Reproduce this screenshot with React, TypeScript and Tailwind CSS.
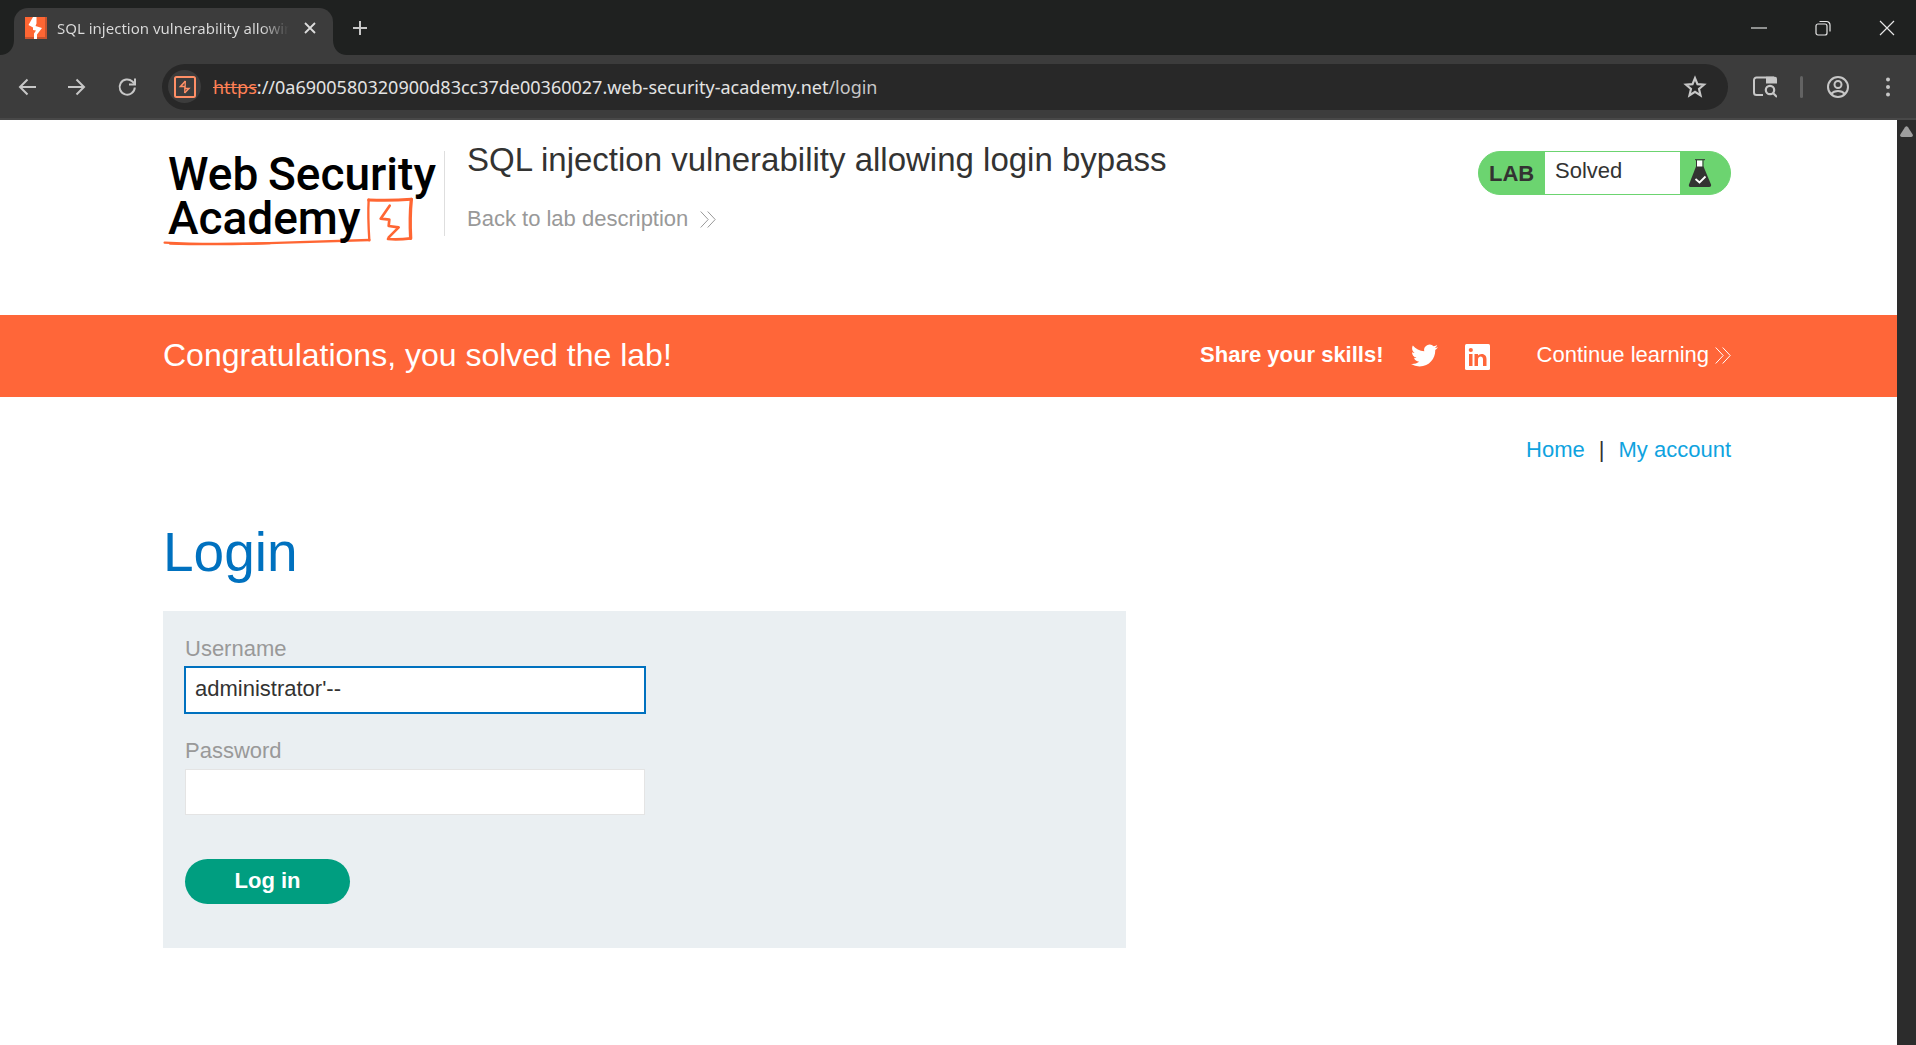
import type { ReactNode } from "react";

function Bolt({ className }: { className: string }) {
  return (
    <svg className={className} viewBox="0 0 22 22" aria-hidden="true">
      <path d="M20 0h2v22h-22v-2h20z" fill="#c9542f" />
      <path d="M8 0h3.500v6.500l-1 2.500 6.500 2-5 6.500V22H9v-5.500l2-3-3-.5v-2.500L3.500 8z" fill="#fff" />
    </svg>
  );
}

function SiteIcon() {
  return (
    <svg className="size-[22px]" viewBox="0 0 22 22" fill="none" stroke="#ff8f66" aria-hidden="true">
      <rect x="1" y="1" width="20" height="20" rx="1.500" strokeWidth="2" />
      <path d="M11.500 5 6.500 10.500h4.500v2h3.800L10.500 17" strokeWidth="1.600" />
      <path d="M11.200 5v5M10.800 12.500V17" strokeWidth="1.300" />
    </svg>
  );
}

function ToolIcon({ children, className }: { children: ReactNode; className: string }) {
  return (
    <svg className={className} viewBox="0 0 24 24" fill="none" stroke="#c7c7c7" strokeWidth="2" aria-hidden="true">
      {children}
    </svg>
  );
}

function Chevrons({ className }: { className: string }) {
  return (
    <svg className={className} viewBox="0 0 16 17" fill="none" stroke="currentColor" strokeWidth="1" aria-hidden="true">
      <path d="M.7.500 8.200 8.500.7 16.500M7.700.500l7.500 8-7.500 8" />
    </svg>
  );
}

function Logo() {
  return (
    <svg className="h-[105px] w-[281px] shrink-0" viewBox="13 15 281 105" role="img" aria-label="Web Security Academy">
      <g transform="scale(0.333333)" fill="none" stroke="#ff6633" strokeLinejoin="round" strokeLinecap="round">
        <path d="M44 338c90 5 240 4 360 0l254-8" strokeWidth="7" />
        <path d="M60 341c80 3 200 2 300-1" strokeWidth="6" />
        <path d="M658 331c-3-45-4-85-2-122" strokeWidth="7" />
        <path d="M656 210c45 2 90 1 128-2" strokeWidth="9" />
        <path d="M784 208c-4 40-4 80-2 117" strokeWidth="10" />
        <path d="M782 325c-24 3-46 4-68 2" strokeWidth="8" />
        <path d="M716 322l30-30-30-4 2-19-26-3 27-39" strokeWidth="8" />
      </g>
      <g fill="#000" fontFamily="Roboto, sans-serif" fontWeight="500" fontSize="46">
        <text x="18" y="60">Web</text>
        <text x="118" y="60">Security</text>
        <text x="18" y="104">Academy</text>
      </g>
    </svg>
  );
}

function Browser() {
  return (
    <>
      <div className="flex h-[55px] items-end bg-[#1f2120] text-[#dcdcdc]">
        <svg className="h-[15px] w-[14px] shrink-0" viewBox="0 0 14 15" aria-hidden="true">
          <path d="M0 15C8 15 14 9 14 0v15z" fill="#3c3c3c" />
        </svg>
        <div className="flex h-[47px] w-[319px] shrink-0 items-center rounded-t-[14px] bg-[#3c3c3c] pr-[11px] pb-2 pl-[11px]">
          <span className="flex size-[22px] shrink-0 bg-[#ff6633]">
            <Bolt className="size-[22px]" />
          </span>
          <span className="ml-2.5 w-[232px] overflow-hidden bg-linear-to-r from-[#dcdcdc] from-88% to-transparent to-100% bg-clip-text font-['Noto_Sans',sans-serif] text-[15px] leading-6 whitespace-nowrap text-transparent">
            SQL injection vulnerability allowing
          </span>
          <button aria-label="Close tab" className="ml-auto flex size-6 items-center justify-center">
            <svg className="size-3" viewBox="0 0 12 12" stroke="#dcdcdc" strokeWidth="1.800" aria-hidden="true">
              <path d="M1 1l10 10M11 1 1 11" />
            </svg>
          </button>
        </div>
        <svg className="h-[15px] w-[14px] shrink-0" viewBox="0 0 14 15" aria-hidden="true">
          <path d="M14 15C6 15 0 9 0 0v15z" fill="#3c3c3c" />
        </svg>
        <button aria-label="New tab" className="ml-px mb-[15px] flex size-6 items-center justify-center">
          <svg className="size-3.5" viewBox="0 0 14 14" stroke="#c7c7c7" strokeWidth="2" aria-hidden="true">
            <path d="M7 0v14M0 7h14" />
          </svg>
        </button>
        <div className="ml-auto flex h-full items-center gap-12 pr-[21px]">
          <button aria-label="Minimize" className="flex h-4 w-4 items-center">
            <span className="h-0.5 w-full bg-[#8f9190]" />
          </button>
          <button aria-label="Restore">
            <svg className="size-4" viewBox="0 0 16 16" fill="none" stroke="#e6e6e6" strokeWidth="1.200" aria-hidden="true">
              <rect x="1" y="4" width="11" height="11" rx="2" />
              <path d="M4.500 1.500h7a3.500 3.500 0 0 1 3.500 3.500v6.500" />
            </svg>
          </button>
          <button aria-label="Close">
            <svg className="size-4" viewBox="0 0 16 16" stroke="#e6e6e6" strokeWidth="1.200" aria-hidden="true">
              <path d="M1 1l14 14M15 1 1 15" />
            </svg>
          </button>
        </div>
      </div>
      <div className="flex h-[65px] items-center border-b-2 border-[#484848] bg-[#3c3c3c] pr-4 pl-[15px]">
        <div className="flex w-[147px] shrink-0 items-center gap-[26px]">
          <button aria-label="Back">
            <ToolIcon className="size-6"><path d="M21 12H5M12.500 4.500 5 12l7.500 7.500" /></ToolIcon>
          </button>
          <button aria-label="Forward">
            <ToolIcon className="size-6"><path d="M3 12h16M11.500 4.500 19 12l-7.500 7.500" /></ToolIcon>
          </button>
          <button aria-label="Reload">
            <ToolIcon className="size-6">
              <path d="M19.800 12.500a7.600 7.600 0 1 1-2.400-6L20 9" />
              <path d="M20 3.500v6h-6" />
            </ToolIcon>
          </button>
        </div>
        <div className="flex h-[46px] flex-1 items-center rounded-full bg-[#282828] pr-5 pl-1.5">
          <span className="flex size-[33px] items-center justify-center rounded-full bg-[#3c3c3c]">
            <SiteIcon />
          </span>
          <span className="ml-3 font-['Noto_Sans',sans-serif] text-[18px] leading-6 text-[#e3e3e3]">
            <span className="text-[#ff8055] line-through">https</span>
            ://0a6900580320900d83cc37de00360027.web-security-academy.net
            <span className="text-[#c7c7c7]">/login</span>
          </span>
          <button aria-label="Bookmark this tab" className="ml-auto">
            <ToolIcon className="size-[26px]">
              <path d="M12 3.800l2.300 5.600 6 .5-4.600 3.900 1.400 5.900-5.100-3.200-5.100 3.200 1.400-5.900-4.600-3.900 6-.5z" />
            </ToolIcon>
          </button>
        </div>
        <button aria-label="Search tabs" className="ml-[25px]">
          <svg className="h-[22px] w-6" viewBox="0 0 24 22" fill="none" stroke="#c7c7c7" strokeWidth="2" aria-hidden="true">
            <path d="M10 19H3.500A2.500 2.500 0 0 1 1 16.500V4a2.500 2.500 0 0 1 2.500-2.500H21" />
            <path d="M13 .700h9a2 2 0 0 1 2 2v4.800H13z" fill="#c7c7c7" stroke="none" />
            <circle cx="17" cy="14" r="4.200" strokeWidth="2.200" />
            <path d="M20 17l4 4" strokeWidth="2.200" />
          </svg>
        </button>
        <span className="ml-[23px] h-[22px] w-[3px] rounded-full bg-[#636363]" />
        <button aria-label="Profile" className="ml-6">
          <svg className="size-[22px]" viewBox="0 0 22 22" fill="none" stroke="#c7c7c7" strokeWidth="2" aria-hidden="true">
            <circle cx="11" cy="11" r="10" />
            <circle cx="11" cy="8.500" r="3.500" />
            <path d="M4 18c3.500-4 10.500-4 14 0" />
          </svg>
        </button>
        <button aria-label="Menu" className="ml-[27px]">
          <svg className="h-[22px] w-6" viewBox="0 0 24 22" fill="#c7c7c7" aria-hidden="true">
            <circle cx="12" cy="3.500" r="2" />
            <circle cx="12" cy="11" r="2" />
            <circle cx="12" cy="18.500" r="2" />
          </svg>
        </button>
      </div>
    </>
  );
}

function LabStatus() {
  return (
    <div className="mt-[31px] flex h-11 w-[253px] shrink-0 overflow-hidden rounded-full border border-[#6cd470] bg-[#6cd470]">
      <span className="flex w-[66px] items-center pl-[10px] text-[22px] font-bold">LAB</span>
      <p className="flex-1 bg-white pl-[10px] text-[22px] leading-[38px]">Solved</p>
      <span className="flex w-[50px] items-center pl-[8px]">
        <svg className="h-7 w-6" viewBox="0 0 24 28" aria-hidden="true">
          <path d="M8.500 1.500h6v7h-6z" fill="#fff" />
          <path d="M7 .700h10M8.500 1v8M15 1v8" stroke="#333" fill="none" />
          <path d="M8 7.500h7.500L23 25.500c.5 1.500-.3 2.500-1.800 2.500H2.500C1 28 .500 27 1 25.500z" fill="#333332" />
          <path d="M7.500 20l4 3.500 6-6" stroke="#fff" strokeWidth="1.800" fill="none" />
        </svg>
      </span>
    </div>
  );
}

function Page() {
  return (
    <main className="min-w-0 flex-1 bg-white">
      <header className="flex h-[195px] items-start pr-[166px] pl-[163px]">
        <div className="mt-[25px]">
          <Logo />
        </div>
        <div className="mt-[31px] h-[85px] w-px shrink-0 bg-[#dedede]" />
        <div className="ml-[22px] min-w-0 flex-1">
          <h2 className="mt-5 text-[33px] leading-10 whitespace-nowrap">SQL injection vulnerability allowing login bypass</h2>
          <a href="#description" className="mt-[25px] inline-flex items-center gap-3 text-[22px] leading-7 text-[#999]">
            Back to lab description
            <Chevrons className="h-[17px] w-4" />
          </a>
        </div>
        <LabStatus />
      </header>
      <section className="flex h-[82px] items-center bg-[#ff6639] pr-[166px] pb-0.5 pl-[163px] text-white">
        <h4 className="mr-auto text-[32px] leading-10">Congratulations, you solved the lab!</h4>
        <span className="text-[22px] leading-7 font-bold">Share your skills!</span>
        <a href="#twitter" aria-label="Share on Twitter" className="ml-[27px]">
          <svg className="size-[27px]" viewBox="0 0 24 24" fill="#fff" aria-hidden="true">
            <path d="M23.953 4.570a10 10 0 0 1-2.825.775 4.958 4.958 0 0 0 2.163-2.723c-.951.555-2.005.959-3.127 1.184a4.920 4.920 0 0 0-8.384 4.482C7.690 8.095 4.067 6.130 1.640 3.162a4.822 4.822 0 0 0-.666 2.475c0 1.710.870 3.213 2.188 4.096a4.904 4.904 0 0 1-2.228-.616v.060a4.923 4.923 0 0 0 3.946 4.827 4.996 4.996 0 0 1-2.212.085 4.936 4.936 0 0 0 4.604 3.417 9.867 9.867 0 0 1-6.102 2.105c-.390 0-.779-.023-1.170-.067a13.995 13.995 0 0 0 7.557 2.209c9.053 0 13.998-7.496 13.998-13.985 0-.210 0-.420-.015-.630A9.935 9.935 0 0 0 24 4.590z" />
          </svg>
        </a>
        <a href="#linkedin" aria-label="Share on LinkedIn" className="ml-[27px] pt-1">
          <svg className="h-[26px] w-[25px]" viewBox="0 0 25 26" aria-hidden="true">
            <rect width="25" height="26" rx="1.500" fill="#fff" />
            <g fill="#ff6639">
              <path d="M4 10h3.500v12H4zM9.500 10H13v12H9.500z" />
              <circle cx="5.800" cy="6" r="2.100" />
              <path d="M13 11.800c1.400-2.800 8.500-3 8.500 3.200v7H18v-6.500c0-4.200-5-3.500-5 0z" />
            </g>
          </svg>
        </a>
        <a href="#learning" className="ml-[47px] flex items-center gap-1.5 text-[22px] leading-7">
          Continue learning
          <Chevrons className="h-[17px] w-4" />
        </a>
      </section>
      <nav className="mt-[39px] flex justify-end gap-[14px] pr-[166px] text-[22px] leading-7 text-[#0fa3df]">
        <a href="#home">Home</a>
        <span className="text-[#333332]">|</span>
        <a href="#account">My account</a>
      </nav>
      <div className="pr-[166px] pl-[163px]">
        <h1 className="mt-14 text-[55px] leading-16 text-[#0071bf]">Login</h1>
        <form className="mt-[27px] w-full max-w-[963px] bg-[#eaeff2] px-[22px] pt-6 pb-11 text-[22px] leading-7">
          <label htmlFor="username" className="block text-[#999]">Username</label>
          <input
            id="username"
            type="text"
            defaultValue="administrator'--"
            className="mt-1 block h-[46px] w-full max-w-[460px] border border-[#0071bf] bg-white px-[9px] pb-0.5 ring-1 ring-[#0071bf] outline-none"
          />
          <label htmlFor="password" className="mt-6 block text-[#999]">Password</label>
          <input
            id="password"
            type="password"
            className="mt-1 block h-[46px] w-full max-w-[460px] border border-[#e4e4e4] bg-white px-[9px] outline-none"
          />
          <button type="button" className="mt-11 block h-[45px] w-[165px] rounded-full bg-[#009e80] pb-0.5 font-bold text-white">
            Log in
          </button>
        </form>
      </div>
    </main>
  );
}

export default function App() {
  return (
    <div className="flex min-h-screen flex-col bg-white font-['Liberation_Sans',Arial,sans-serif] text-[#333332]">
      <Browser />
      <div className="flex flex-1">
        <Page />
        <div className="flex w-[19px] shrink-0 justify-center bg-[#2c2c2c] pt-1.5">
          <svg className="h-[11px] w-[13px]" viewBox="0 0 13 11" aria-hidden="true">
            <path d="M5 1.200q1.500-2 3 0l4.700 7.300q.7 2.500-1.500 2.500H1.800Q-.4 11 .3 8.500z" fill="#9f9f9f" />
          </svg>
        </div>
      </div>
    </div>
  );
}
